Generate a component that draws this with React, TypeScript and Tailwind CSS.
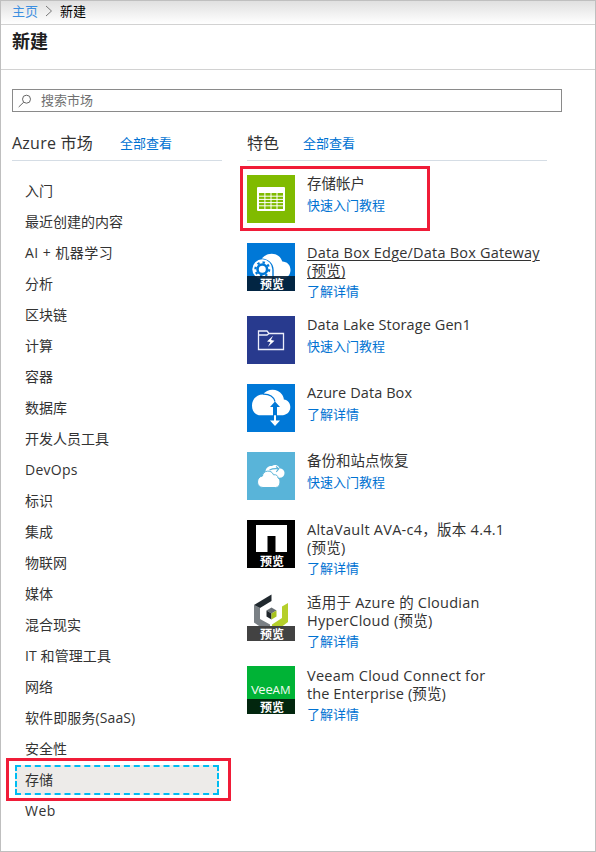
import type { ReactNode } from 'react';

const categories: { label: string; tracking?: string }[] = [
  { label: '入门' },
  { label: '最近创建的内容' },
  { label: 'AI + 机器学习', tracking: 'tracking-[0.45px]' },
  { label: '分析' },
  { label: '区块链' },
  { label: '计算' },
  { label: '容器' },
  { label: '数据库' },
  { label: '开发人员工具' },
  { label: 'DevOps', tracking: 'tracking-[0.25px]' },
  { label: '标识' },
  { label: '集成' },
  { label: '物联网' },
  { label: '媒体' },
  { label: '混合现实' },
  { label: 'IT 和管理工具', tracking: 'tracking-[0.1px]' },
  { label: '网络' },
  { label: '软件即服务(SaaS)', tracking: 'tracking-[0.1px]' },
  { label: '安全性' },
  { label: '存储' },
  { label: 'Web', tracking: 'tracking-[0.5px]' },
];

function Tile({ color, preview, children }: { color: string; preview?: string; children: ReactNode }) {
  return (
    <div className={`relative h-12 w-12 shrink-0 ${color}`}>
      <svg viewBox="0 0 48 48" className="block h-12 w-12">
        {children}
      </svg>
      {preview && (
        <div className={`absolute inset-x-0 bottom-0 h-[15px] pl-0.5 text-center text-[12px] leading-[17px] font-bold text-white ${preview}`}>
          预览
        </div>
      )}
    </div>
  );
}

const StorageIcon = (
  <Tile color="bg-[#80bb00]">
    <rect x="10" y="12" width="28" height="24" rx="1" fill="#fff" />
    <rect x="12" y="18" width="24" height="16" fill="#80bb00" />
    <path d="M12 21.2h24M12 24.4h24M12 27.6h24M12 30.8h24M17.900 18v16M24 18v16M30 18v16" stroke="#fff" strokeWidth="1" />
  </Tile>
);

const EdgeIcon = (
  <Tile color="bg-[#0078d7]" preview="bg-[#021c33]/90">
    <path d="M14 17C18 9 32 8 35.300 18.500 40 18.500 43.500 22 43.500 27S40 35.500 35 35.500H20Z" fill="#fff" />
    <path d="M13 15.200c7 0 13.700 4 13.700 12v9H15.300a10 10 0 0 1-5-18.500Z" fill="#0078d7" />
    <path d="M15.300 16.300a10 10 0 1 0 0 20h10v-10a10 10 0 0 0-10-10Z" fill="#fff" />
    <circle cx="15.300" cy="26.300" r="4.800" stroke="#0078d7" strokeWidth="2.600" fill="none" />
    <circle cx="15.300" cy="26.300" r="6.900" stroke="#0078d7" strokeWidth="2.200" strokeDasharray="2.400 3.019" fill="none" />
  </Tile>
);

const LakeIcon = (
  <Tile color="bg-[#283a8e]">
    <path d="M11.500 33.500v-18.500h8.500l2 2.500h14.500v16ZM11.500 19h8.500l2-1.500" fill="none" stroke="#eceefa" strokeWidth="1.300" />
    <path d="m26 19.800-6 5.600 3.400.6-2.400 4.700 6.500-6-3.500-.700Z" fill="#fff" />
  </Tile>
);

const DataBoxIcon = (
  <Tile color="bg-[#0078d7]">
    <path d="M16 10.500C20 4 31 4 35 10.500c1.500 2.300 1.800 4 1.800 5 4 .5 6.500 3.500 6.500 7.500 0 5.500-4 8.300-9 8.300H14C8 31.300 5 27 5 21.500S9 10.500 16 10.500Z" fill="#fff" />
    <path d="M16 10.200c6-.2 10.500 2.300 12 7.300" stroke="#0078d7" strokeWidth="1.200" fill="none" />
    <path d="m28 17.500-5 5.500h3v9h4v-9h3Z" fill="#0078d7" />
    <path d="M27 31.300v5.200h-4l5 5.500 5-5.500h-4v-5.200Z" fill="#fff" />
  </Tile>
);

const BackupIcon = (
  <Tile color="bg-[#59b4d9]">
    <path d="M18.500 20c0-4 3-6.500 6.500-6 3-2.500 7.500 0 7.500 2.500 3 0 5 2 5 4.500 0 3-2 4.800-5 4.800h-8Z" fill="#fff" />
    <path d="M22.500 18c3-1.500 7-1.500 9-1.200M29 14.500l2.800 2.400-2.500 3" stroke="#59b4d9" strokeWidth="1.100" fill="none" />
    <path d="M15.500 24c0-5.500 9-7 11-1.200 3-.6 4.500 1.200 4.500 3.200 1.300.5 2 2.200 2 4 0 3-1.500 5.500-4.500 5.500H16c-3.500 0-5.500-2.500-5.500-5.500 0-3.300 2-5.500 5-6Z" fill="#fff" stroke="#59b4d9" strokeWidth="1" />
  </Tile>
);

const VaultIcon = (
  <Tile color="bg-black" preview="bg-black">
    <path d="M9 5h31v27H28.500V16H20.500v16H9Z" fill="#fff" />
  </Tile>
);

const CloudianIcon = (
  <Tile color="bg-white" preview="bg-[#424242]">
    <path d="m7 12 6 3v11l10 5.500V35h-8l-8-5.500Z" fill="#7a8085" />
    <path d="M7 12 24.500 1.500V8L13 15Z" fill="#20282e" />
    <path d="m41 10-6 3.500V25l-10 6.500V35h8l8-6Z" fill="#b5cf2b" />
    <path d="m19.500 17.500 5-3 5 3-5 3Z" fill="#697075" />
    <path d="m19.500 17.500 5 3v6l-5-3Z" fill="#1f262b" />
    <path d="m29.500 17.500-5 3v6l5-3Z" fill="#a7c21d" />
  </Tile>
);

const VeeamIcon = (
  <Tile color="bg-[#00b336]" preview="bg-[#02260e]">
    <g fill="#f0fbf2" fontFamily="Open Sans, sans-serif">
      <text x="4" y="27.500" fontSize="10" textLength="8" lengthAdjust="spacingAndGlyphs">V</text>
      <text x="11.200" y="27.500" fontSize="13" textLength="14.500" lengthAdjust="spacingAndGlyphs">ee</text>
      <text x="25.500" y="27.500" fontSize="10" textLength="18" lengthAdjust="spacingAndGlyphs">AM</text>
    </g>
  </Tile>
);

const products: { icon: ReactNode; lines: { text: string; tracking: string }[]; link: string; underline?: boolean }[] = [
  { icon: StorageIcon, lines: [{ text: '存储帐户', tracking: '' }], link: '快速入门教程' },
  {
    icon: EdgeIcon,
    lines: [
      { text: 'Data Box Edge/Data Box Gateway', tracking: 'tracking-[0.2px]' },
      { text: '(预览)', tracking: 'tracking-[0.2px]' },
    ],
    link: '了解详情',
    underline: true,
  },
  { icon: LakeIcon, lines: [{ text: 'Data Lake Storage Gen1', tracking: 'tracking-[0.08px]' }], link: '快速入门教程' },
  { icon: DataBoxIcon, lines: [{ text: 'Azure Data Box', tracking: 'tracking-[0.08px]' }], link: '了解详情' },
  { icon: BackupIcon, lines: [{ text: '备份和站点恢复', tracking: '' }], link: '快速入门教程' },
  {
    icon: VaultIcon,
    lines: [
      { text: 'AltaVault AVA-c4，版本 4.4.1', tracking: 'tracking-[0.26px]' },
      { text: '(预览)', tracking: 'tracking-[0.2px]' },
    ],
    link: '了解详情',
  },
  {
    icon: CloudianIcon,
    lines: [
      { text: '适用于 Azure 的 Cloudian', tracking: 'tracking-[0.22px]' },
      { text: 'HyperCloud (预览)', tracking: 'tracking-[0.27px]' },
    ],
    link: '了解详情',
  },
  {
    icon: VeeamIcon,
    lines: [
      { text: 'Veeam Cloud Connect for', tracking: 'tracking-[0.26px]' },
      { text: 'the Enterprise (预览)', tracking: 'tracking-[0.1px]' },
    ],
    link: '了解详情',
  },
];

export default function App() {
  return (
    <div className="h-[852px] w-[596px] overflow-hidden border border-[#bfbfbf] bg-white font-['Open_Sans','Noto_Sans_CJK_SC',sans-serif] text-[#333]">
      <nav className="flex h-6 items-center border-b border-[#d2d2d2] bg-linear-to-b from-[#e0e0e0] to-white pb-[3px] pl-[11px] text-[13px] leading-5">
        <a className="text-[#3d8fe0]">主页</a>
        <svg viewBox="0 0 8 12" className="mx-[7px] h-3 w-2" fill="none" stroke="#777">
          <path d="m1 1 5.500 5L1 11" />
        </svg>
        <span className="text-black">新建</span>
      </nav>
      <header className="h-[45px] border-b border-[#d2d2d2] pl-[11px]">
        <h1 className="pt-[3px] text-[18px] leading-[26px] font-bold text-[#1f1f1f]">新建</h1>
      </header>

      <div className="mt-[19px] ml-[11px] flex h-[23px] w-[550px] items-center border border-[#8a8a8a] pl-[5px]">
        <svg viewBox="0 0 14 14" className="h-3.5 w-3.5" fill="none" stroke="#666">
          <circle cx="8.500" cy="5.200" r="4" />
          <path d="M5.700 8.200.700 13" />
        </svg>
        <span className="ml-[9px] pb-0.5 text-[13px] leading-[18px] text-[#707070]">搜索市场</span>
      </div>

      <main className="mt-[15px] flex pl-[11px]">
        <section className="w-[210px]">
          <div className="flex h-[34px] items-center border-b border-[#d5dde5]">
            <h2 className="w-[108px] pb-0.5 text-[16px] leading-6 tracking-[0.25px] whitespace-nowrap">Azure 市场</h2>
            <a className="text-[13px] text-[#0072d2]">全部查看</a>
          </div>
          <ul className="mt-[14px] ml-[3px] w-[204px]">
            {categories.map(({ label, tracking = '' }) => (
              <li
                key={label}
                className={
                  label === '存储'
                    ? 'relative mt-px flex h-[30px] items-center border-2 border-dashed border-[#00bcf2] bg-[#edebe9] pb-0.5 pl-2 text-[14px]'
                    : 'flex h-[31px] items-center pl-2.5 text-[14px]'
                }
              >
                <span className={`whitespace-nowrap ${tracking}`}>{label}</span>
                {label === '存储' && (
                  <div className="absolute -top-[9px] -left-[11px] h-[43px] w-[225px] border-3 border-[#f01c38]" />
                )}
              </li>
            ))}
          </ul>
        </section>

        <section className="ml-[25px] w-[300px]">
          <div className="flex h-[34px] items-center border-b border-[#d5dde5]">
            <h2 className="w-[56px] pb-0.5 text-[16px] leading-6">特色</h2>
            <a className="text-[13px] text-[#0072d2]">全部查看</a>
          </div>
          <ul className="mt-[14px]">
            {products.map(({ icon, lines, link, underline }, index) => (
              <li key={lines[0].text} className={`relative flex gap-3 ${lines.length > 1 ? 'h-[73px]' : 'h-[68px]'}`}>
                {icon}
                <div className={lines.length > 1 ? 'pt-px' : ''}>
                  {lines.map(({ text, tracking }) => (
                    <div
                      key={text}
                      className={`text-[14.5px] leading-[18px] whitespace-nowrap ${underline ? 'underline decoration-1 underline-offset-2' : ''}`}
                    >
                      <span className={tracking}>{text}</span>
                    </div>
                  ))}
                  <a className={`block text-[13px] leading-[18px] text-[#0072d2] ${lines.length > 1 ? 'mt-0.5' : 'mt-[3px]'}`}>{link}</a>
                </div>
                {index === 0 && (
                  <div className="absolute -top-[9px] -left-[7px] h-[65px] w-[190px] border-3 border-[#f01c38]" />
                )}
              </li>
            ))}
          </ul>
        </section>
      </main>
    </div>
  );
}
